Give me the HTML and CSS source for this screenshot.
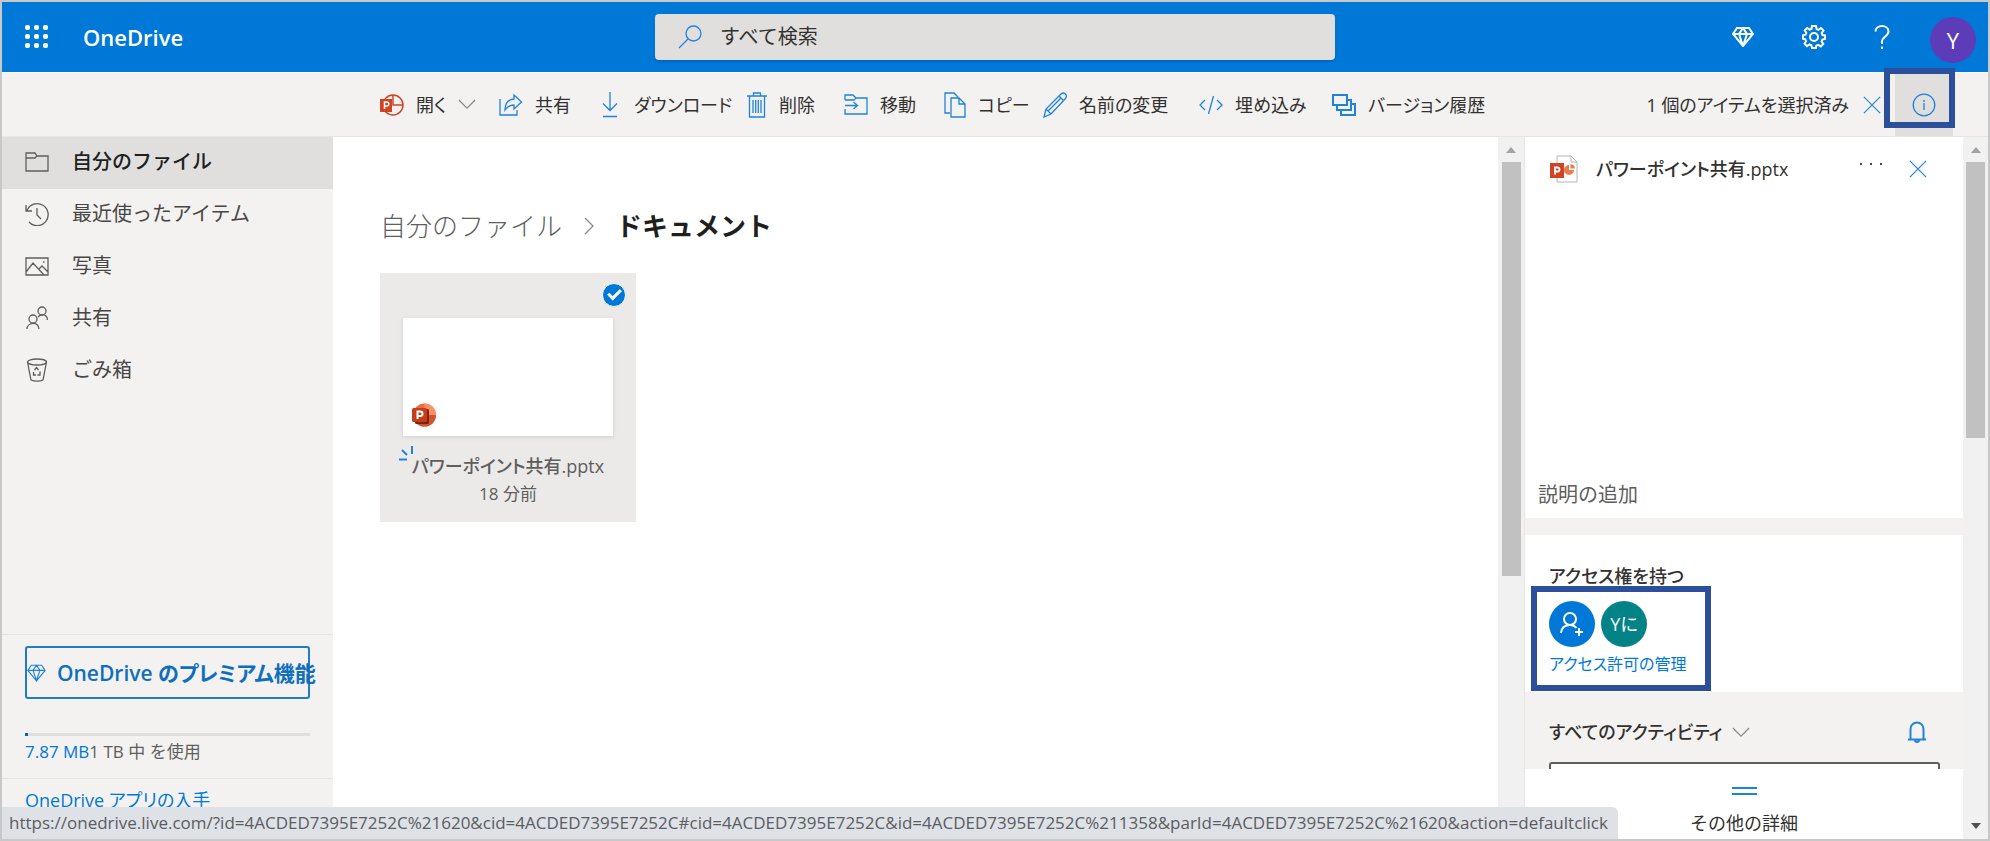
FILE: index.html
```html
<!DOCTYPE html>
<html lang="ja">
<head>
<meta charset="utf-8">
<title>OneDrive</title>
<link rel="stylesheet" href="styles.css">
</head>
<body>
<svg class="defs" aria-hidden="true">
  <symbol id="gem" viewBox="0 0 22 20"><path d="M5 1h12l4 6-10 12L1 7zM1 7h20M11 1L7 7l4 12 4-12z"/></symbol>
  <symbol id="close" viewBox="0 0 20 20"><path d="M1 1l18 18M19 1L1 19"/></symbol>
  <symbol id="chevron" viewBox="0 0 20 12"><path d="M1 1l9 9 9-9"/></symbol>
</svg>
<div class="app">
  <header class="header">
    <button class="icon-btn waffle" aria-label="アプリ起動ツール">
      <svg class="dots" viewBox="0 0 24 24"><g fill="#fff"><rect x="0" y="0" width="5" height="5" rx="2"/><rect x="9" y="0" width="5" height="5" rx="2"/><rect x="18" y="0" width="5" height="5" rx="2"/><rect x="0" y="9" width="5" height="5" rx="2"/><rect x="9" y="9" width="5" height="5" rx="2"/><rect x="18" y="9" width="5" height="5" rx="2"/><rect x="0" y="18" width="5" height="5" rx="2"/><rect x="9" y="18" width="5" height="5" rx="2"/><rect x="18" y="18" width="5" height="5" rx="2"/></g></svg>
    </button>
    <a class="brand" href="#">OneDrive</a>
    <label class="search">
      <svg class="line" width="24" height="24" viewBox="0 0 24 24"><circle cx="15.500" cy="8.500" r="7.500"/><path d="M10 14L1 23"/></svg>
      <input type="search" placeholder="すべて検索" aria-label="すべて検索">
    </label>
    <div class="header-tools">
      <button class="icon-btn" aria-label="プレミアム"><svg class="line bold" width="22" height="20"><use href="#gem"/></svg></button>
      <button class="icon-btn" aria-label="設定"><svg class="line bold" width="24" height="24" viewBox="0 0 24 24"><path d="M10 1h4l.6 3 1.800.8L19 3l2.500 2.500L19.700 8l.8 2 2.500.4v3.500l-2.600.6-.8 2 1.700 2.400-2.500 2.500-2.600-1.600-1.900.8L14 23h-4l-.6-2.700-1.900-.8L5 21.200l-2.500-2.500 1.600-2.500-.8-1.900L1 13.800v-3.500l2.600-.6.7-1.800L2.700 5.400 5.200 3l2.400 1.600 1.900-.7z"/><circle cx="12" cy="12" r="4"/></svg></button>
      <button class="icon-btn" aria-label="ヘルプ"><svg class="line bold" width="16" height="24" viewBox="0 0 16 24"><path d="M1.500 6.500C1.500 3 4.500 1 8 1s6.500 2 6.500 5.500c0 4.500-6.500 5.500-6.500 10V19M8 21.500V24"/></svg></button>
      <button class="avatar user">Y</button>
    </div>
  </header>

  <div class="toolbar" role="toolbar">
    <div class="commands">
      <button class="cmd"><svg width="24" height="24" viewBox="0 0 24 24"><circle cx="13" cy="12" r="10" fill="none" stroke="#d04423" stroke-width="1.500"/><path d="M13 2v10h10" fill="none" stroke="#d04423" stroke-width="1.500"/><rect x="0" y="6" width="12" height="13" fill="#d04423"/><path d="M4.500 16V9h2.300a2 2 0 0 1 0 4H4.500" fill="none" stroke="#fff" stroke-width="1.500"/></svg>開く<svg class="line grey" width="18" height="11"><use href="#chevron"/></svg></button>
      <button class="cmd"><svg class="line" width="24" height="24" viewBox="0 0 24 24"><path d="M1 6v16h17v-5M15 2l7.500 7L15 16v-4c-5 0-7 2-9 5 0-7 3-10.500 9-11z"/></svg>共有</button>
      <button class="cmd"><svg class="line" width="20" height="26" viewBox="0 0 20 26"><path d="M8 0v18M1 11.500l7 7 7-7M1 24.500h14"/></svg>ダウンロード</button>
      <button class="cmd"><svg class="line" width="20" height="26" viewBox="0 0 20 26"><path d="M0 4h20M6.500 4V1h7v3M2.500 4v21h15V4M6 8v13M8.700 8v13M11.300 8v13M14 8v13"/></svg>削除</button>
      <button class="cmd"><svg class="line" width="24" height="22" viewBox="0 0 24 22"><path d="M1 6V1h8l3 3h11v16H1v-5M1 6h9l2-2M1 11.500h12M9.500 8l4 3.500-4 3.500"/></svg>移動</button>
      <button class="cmd"><svg class="line" width="22" height="26" viewBox="0 0 22 26"><path d="M6 21H1V1h9l4 4M7 6h8l6 6v13H7zM15 6v6h6"/></svg>コピー</button>
      <button class="cmd"><svg class="line" width="24" height="26" viewBox="0 0 24 26"><path d="M1 25l2-8L18 2c3-2.500 7 1 4.500 4.500L8 22zM3 17l5 5M16 4l5 5M5 19L18 6"/></svg>名前の変更</button>
      <button class="cmd"><svg class="line" width="24" height="20" viewBox="0 0 24 20"><path d="M6 5l-5 5 5 5M18 5l5 5-5 5M14.500 1l-5 18"/></svg>埋め込み</button>
      <button class="cmd"><svg class="line bold" width="24" height="24" viewBox="0 0 24 24"><path d="M1 2h14v10H1zM5 12v5h14V7h-4M9 17v5h14V11h-4"/></svg>バージョン履歴</button>
    </div>
    <div class="selection">
      <span>1 個のアイテムを選択済み</span>
      <button class="icon-btn" aria-label="選択を解除"><svg class="line" width="18" height="18"><use href="#close"/></svg></button>
      <button class="icon-btn info" aria-label="情報"><svg class="line" width="24" height="24" viewBox="0 0 24 24"><circle cx="12" cy="12" r="10.800"/><path d="M12 10v7M12 7v2"/></svg></button>
    </div>
  </div>

  <div class="body">
    <aside class="sidebar">
      <nav class="nav">
        <a class="nav-item active" href="#"><svg class="line" width="24" height="24" viewBox="0 0 24 24"><path d="M1 3h9l2 3h11v15H1zM1 8h9l2-2"/></svg>自分のファイル</a>
        <a class="nav-item" href="#"><svg class="line" width="24" height="24" viewBox="0 0 24 24"><path d="M1 3v6h6M2 8.500A11 11 0 1 1 4 20M12 6v7l4 4"/></svg>最近使ったアイテム</a>
        <a class="nav-item" href="#"><svg class="line" width="24" height="24" viewBox="0 0 24 24"><path d="M1 4h22v17H1zM1 18l7-9 11 12M14 15l3-3 6 6M18 8h1.500"/></svg>写真</a>
        <a class="nav-item" href="#"><svg class="line" width="24" height="24" viewBox="0 0 24 24"><circle cx="8" cy="13" r="4"/><circle cx="17" cy="5" r="4"/><path d="M2 23c0-7 12-8 12 0M13 11c3-3.500 9-3 9.500 3"/></svg>共有</a>
        <a class="nav-item" href="#"><svg class="line" width="24" height="24" viewBox="0 0 24 24"><ellipse cx="12" cy="4" rx="9.500" ry="3"/><path d="M2.500 4L6 22c3 1.500 9 1.500 12 0l3.500-18M9.500 12l2-2.500 2 2.500M8.500 14v3h2.500M15 13.500V17h-2.500"/></svg>ごみ箱</a>
      </nav>
      <div class="premium">
        <button class="premium-btn"><svg class="line" width="19" height="18"><use href="#gem"/></svg>OneDrive のプレミアム機能</button>
        <div class="meter"><div class="meter-fill" style="width:1%"></div></div>
        <p class="quota"><a href="#">7.87 MB</a>1 TB 中 を使用</p>
      </div>
      <div class="get-app"><a href="#">OneDrive アプリの入手</a></div>
    </aside>

    <main class="files">
      <div class="crumbs">
        <a href="#">自分のファイル</a>
        <svg class="line grey" width="10" height="18" viewBox="0 0 10 18"><path d="M1 1l8 8-8 8"/></svg>
        <h1>ドキュメント</h1>
      </div>
      <article class="tile">
        <input class="tile-check" type="checkbox" checked aria-label="パワーポイント共有.pptx">
        <div class="thumb">
          <svg width="24" height="24" viewBox="0 0 24 24"><circle cx="12.500" cy="12" r="11.500" fill="#ed6c47"/><path d="M12.500.5A11.500 11.500 0 0 1 24 12H12.500z" fill="#ff8f6b"/><path d="M1 12h23a11.500 11.500 0 0 1-23 0z" fill="#d35230"/><rect x="3" y="6" width="14" height="15" rx="1.500" fill="#7a2513"/><rect x="0" y="5" width="15" height="14" rx="1.500" fill="#c43e1c"/><path d="M5.500 16V8.500h2.700a2.300 2.300 0 0 1 0 4.600H5.500" fill="none" stroke="#fff" stroke-width="2"/></svg>
        </div>
        <div class="tile-name"><svg class="spark" width="14" height="16" viewBox="0 0 14 16"><path d="M13 1v8M3 5l5 5M0 14.500h8"/></svg>パワーポイント共有.pptx</div>
        <div class="tile-date">18 分前</div>
      </article>
    </main>

    <div class="scroll"><i class="arrow up"></i><div class="thumb-bar" style="height:414px"></div></div>

    <aside class="details">
      <section class="card preview">
        <div class="file-head">
          <svg width="28" height="28" viewBox="0 0 28 28"><path d="M7 1h14l6 6v20H7zM21 1v6h6" fill="#fff" stroke="#b5b5b5"/><path d="M19 10a5 5 0 1 0 5 5h-5z" fill="#ed7d4a"/><path d="M20.500 9v4.500H25a5 5 0 0 0-4.500-4.500z" fill="#ed7d4a"/><rect x="0" y="8" width="14" height="15" fill="#d04423"/><path d="M5 19.500v-7h2.500a2 2 0 0 1 0 4H5" fill="none" stroke="#fff" stroke-width="1.800"/></svg>
          <h2>パワーポイント共有.pptx</h2>
          <button class="icon-btn more" aria-label="その他"><svg width="22" height="4" viewBox="0 0 22 4"><path d="M0 1h2v2H0zM10 1h2v2h-2zM20 1h2v2h-2z" fill="#444"/></svg></button>
          <button class="icon-btn" aria-label="閉じる"><svg class="line" width="18" height="18"><use href="#close"/></svg></button>
        </div>
        <button class="describe">説明の追加</button>
      </section>
      <section class="card access">
        <h3>アクセス権を持つ</h3>
        <div class="access-box">
          <div class="people">
            <button class="avatar add" aria-label="共有"><svg class="line bold" width="26" height="26" viewBox="0 0 26 26"><circle cx="11" cy="8" r="6"/><path d="M2 22c.5-5 4-8 9-8 3 0 5 1 6.500 3M20 17v8M16 21h8"/></svg></button>
            <button class="avatar member">Yに</button>
          </div>
          <a href="#">アクセス許可の管理</a>
        </div>
      </section>
      <section class="activity">
        <div class="activity-head">
          <button class="activity-btn">すべてのアクティビティ<svg class="line grey" width="18" height="11"><use href="#chevron"/></svg></button>
          <button class="icon-btn" aria-label="通知"><svg class="line bold" width="18" height="22" viewBox="0 0 18 22"><path d="M0 18.500h18M2.500 18.500V8a6.500 6.500 0 0 1 13 0v10.500M7 19a2 2 0 0 0 4 0"/></svg></button>
        </div>
        <input class="comment" type="text" aria-label="コメント">
      </section>
      <button class="card more-details"><svg class="line bold" width="25" height="8" viewBox="0 0 25 8"><path d="M0 1h25M0 7h25"/></svg>その他の詳細</button>
    </aside>

    <div class="scroll"><i class="arrow up"></i><div class="thumb-bar" style="height:276px"></div><i class="arrow down"></i></div>
  </div>
  <div class="status">https://onedrive.live.com/?id=4ACDED7395E7252C%21620&amp;cid=4ACDED7395E7252C#cid=4ACDED7395E7252C&amp;id=4ACDED7395E7252C%211358&amp;parId=4ACDED7395E7252C%21620&amp;action=defaultclick</div>
</div>
</body>
</html>
```
FILE: styles.css
```css
*, *::before, *::after { box-sizing: border-box; }
body {
  margin: 0;
  font-family: "Open Sans", "Noto Sans CJK JP", sans-serif;
  font-size: 20px;
  line-height: 28px;
  color: #323130;
}
h1, h2, h3, p { margin: 0; }
a { color: #0078d7; text-decoration: none; }
button {
  font: inherit;
  color: inherit;
  background: none;
  border: 0;
  padding: 0;
}
svg { flex: none; display: block; }
.defs { position: absolute; width: 0; height: 0; }
.line { fill: none; stroke: #1f83dc; stroke-width: 1.3; }
.bold { stroke-width: 2; }
.grey { stroke: #8a8886; }

.app {
  position: relative;
  display: flex;
  flex-direction: column;
  height: 100vh;
  border: 2px solid #c8c8c8;
  overflow: hidden;
  background: #fff;
}
.icon-btn { display: grid; place-items: center; }

/* Header */
.header {
  flex: none;
  display: grid;
  grid-template-columns: 81px 572px minmax(200px, 680px) 1fr;
  align-items: center;
  height: 70px;
  padding-right: 12px;
  background: #0078d7;
}
.waffle { justify-self: start; padding-left: 23px; }
.dots { width: 24px; height: 24px; }
.brand { color: #fff; font-size: 22px; font-weight: 600; }
.search {
  display: flex;
  align-items: center;
  gap: 16px;
  height: 46px;
  padding: 0 23px;
  border-radius: 4px;
  background: #e1dfdd;
  box-shadow: 0 2px 2px #0067bf;
}
.search input {
  flex: 1;
  border: 0;
  outline: 0;
  background: none;
  font: inherit;
  color: #323130;
}
.search input::placeholder { color: #323130; opacity: 1; }
.header-tools { display: flex; justify-content: flex-end; align-items: center; gap: 48px; }
.header-tools .line { stroke: #fff; }
.avatar {
  display: grid;
  place-items: center;
  width: 46px;
  height: 46px;
  border-radius: 50%;
  color: #fff;
}
.user { background: #5c3cb8; margin-top: 6px; margin-left: -8px; font-size: 22px; }

/* Command bar */
.toolbar {
  flex: none;
  display: flex;
  justify-content: space-between;
  height: 65px;
  padding: 0 35px 0 378px;
  border-top: 1px solid #fff;
  border-bottom: 1px solid #e8e6e4;
  background: #f3f2f1;
}
.commands {
  display: grid;
  grid-template-columns: 119px 103px 145px 97px 100px 99px 156px 133px auto;
  font-size: 18px;
  font-feature-settings: "palt";
}
.cmd { display: flex; align-items: center; gap: 12px; white-space: nowrap; }
.selection {
  display: flex;
  align-items: center;
  gap: 14px;
  white-space: nowrap;
  font-size: 18px;
  font-feature-settings: "palt";
}
.info {
  position: relative;
  width: 58px;
  height: 63px;
  background: #e1dfdd;
}
.info::after {
  content: "";
  position: absolute;
  inset: -5px -2px 8px -11px;
  border: 6px solid #2b4f9a;
}

/* Layout below the bars */
.body {
  flex: 1;
  min-height: 0;
  display: grid;
  grid-template-columns: 331px 1fr 26px 439px 25px;
}
.body > * { min-height: 0; }

/* Sidebar */
.sidebar { display: flex; flex-direction: column; background: #f3f2f1; }
.nav { flex: 1; }
.nav .line { stroke: #605e5c; }
.nav-item {
  display: flex;
  align-items: center;
  gap: 23px;
  height: 52px;
  padding: 0 0 2px 23px;
  color: #484644;
}
.active { background: #e1dfdd; color: #201f1e; font-weight: 500; }
.premium {
  height: 144px;
  padding: 11px 23px 0;
  border-top: 1px solid #e6e4e2;
}
.premium-btn {
  display: flex;
  align-items: center;
  gap: 11px;
  width: 100%;
  height: 53px;
  border: 2px solid #1f7cc9;
  border-radius: 3px;
  color: #106ebe;
  font-weight: 600;
  font-size: 21px;
  white-space: nowrap;
  font-feature-settings: "palt";
}
.meter { height: 3px; margin: 34px 0 4px; background: #e1dfdd; }
.meter-fill { height: 3px; background: #0067b8; }
.quota { font-size: 17px; line-height: 24px; color: #605e5c; }
.get-app {
  height: 61px;
  padding: 7px 23px;
  border-top: 1px solid #e6e4e2;
  font-size: 18px;
  font-feature-settings: "palt";
}

/* File area */
.files { padding: 69px 47px 0; min-width: 0; }
.crumbs {
  display: flex;
  align-items: center;
  gap: 22px;
  height: 40px;
  font-size: 26px;
}
.crumbs a { color: #605e5c; font-weight: 300; }
.crumbs h1 { font-size: 26px; font-weight: 700; color: #201f1e; }
.tile {
  position: relative;
  width: 256px;
  height: 249px;
  margin-top: 27px;
  padding: 45px 23px 0;
  background: #ebeae9;
  text-align: center;
  color: #605e5c;
}
.tile-check {
  position: absolute;
  top: 10px;
  right: 10px;
  appearance: none;
  width: 24px;
  height: 24px;
  margin: 0;
  border: 1px solid #fff;
  border-radius: 50%;
  background: #0078d7;
  display: grid;
  place-items: center;
}
.tile-check::after {
  content: "";
  width: 13px;
  height: 8px;
  margin-bottom: 4px;
  border: solid #fff;
  border-width: 0 0 3px 3px;
  transform: rotate(-45deg);
}
.thumb {
  display: flex;
  align-items: flex-end;
  height: 118px;
  padding: 9px;
  background: #fff;
  box-shadow: 0 1px 4px #d0cecc;
}
.tile-name {
  position: relative;
  margin-top: 16px;
  font-weight: 500;
  white-space: nowrap;
  font-size: 18px;
  font-feature-settings: "palt";
}
.spark {
  position: absolute;
  left: -4px;
  top: -7px;
  fill: none;
  stroke: #1f83dc;
  stroke-width: 2;
}
.tile-date { font-size: 17px; }

/* Scrollbars */
.scroll {
  display: flex;
  flex-direction: column;
  align-items: center;
  background: #f1f1f1;
}
.arrow {
  flex: none;
  border: 5px solid transparent;
  height: 0;
}
.up { margin: 10px 0 9px; border-top: 0; border-bottom: 6px solid #a3a3a3; }
.down { margin: auto 0 10px; border-bottom: 0; border-top: 6px solid #505050; }
.thumb-bar { flex: none; width: 19px; background: #c1c1c1; }

/* Details pane */
.details {
  display: flex;
  flex-direction: column;
  background: #f3f2f1;
  border-left: 1px solid #e8e6e4;
  white-space: nowrap;
}
.card { background: #fff; }
.preview {
  flex: none;
  display: flex;
  flex-direction: column;
  justify-content: space-between;
  align-items: stretch;
  height: 381px;
  padding: 18px 13px 9px;
}
.file-head { display: flex; align-items: center; padding: 0 23px 0 12px; gap: 18px; }
.file-head h2 {
  flex: 1;
  font-size: 18px;
  font-weight: 500;
  font-feature-settings: "palt";
}
.more { padding-bottom: 10px; margin-right: 9px; }
.describe { align-self: flex-start; color: #605e5c; }
.access { flex: none; height: 157px; margin-top: 17px; padding: 27px 24px 0; }
.access h3, .activity-btn {
  font-size: 18px;
  font-weight: 500;
  font-feature-settings: "palt";
}
.access-box {
  position: relative;
  display: inline-block;
  margin-top: 11px;
  font-size: 16px;
  line-height: 34px;
  font-feature-settings: "palt";
}
.access-box a { display: block; }
.access-box::after {
  content: "";
  position: absolute;
  top: -15px;
  left: -18px;
  width: 180px;
  height: 105px;
  border: 6px solid #2b4f9a;
  pointer-events: none;
}
.people { display: flex; gap: 6px; }
.add { background: #0078d7; }
.add .line { stroke: #fff; }
.member { background: #038387; font-size: 18px; }
.activity {
  flex: 1;
  min-height: 0;
  overflow: hidden;
  padding: 26px 23px 0 24px;
}
.activity-head { display: flex; justify-content: space-between; padding-right: 14px; }
.activity-btn { display: flex; align-items: center; gap: 10px; }
.comment {
  display: block;
  width: 100%;
  height: 40px;
  margin-top: 16px;
  border: 2px solid #605e5c;
  border-radius: 3px;
  background: #fff;
}
.more-details {
  flex: none;
  display: flex;
  flex-direction: column;
  align-items: center;
  gap: 14px;
  height: 70px;
  padding-top: 18px;
  font-size: 18px;
}

/* Link target shown by the browser */
.status {
  position: absolute;
  left: 0;
  bottom: 0;
  height: 32px;
  padding: 0 10px 0 7px;
  border-top-right-radius: 6px;
  background: #dee1e6;
  color: #5a5d61;
  font-size: 17px;
  line-height: 32px;
  white-space: nowrap;
}
```
